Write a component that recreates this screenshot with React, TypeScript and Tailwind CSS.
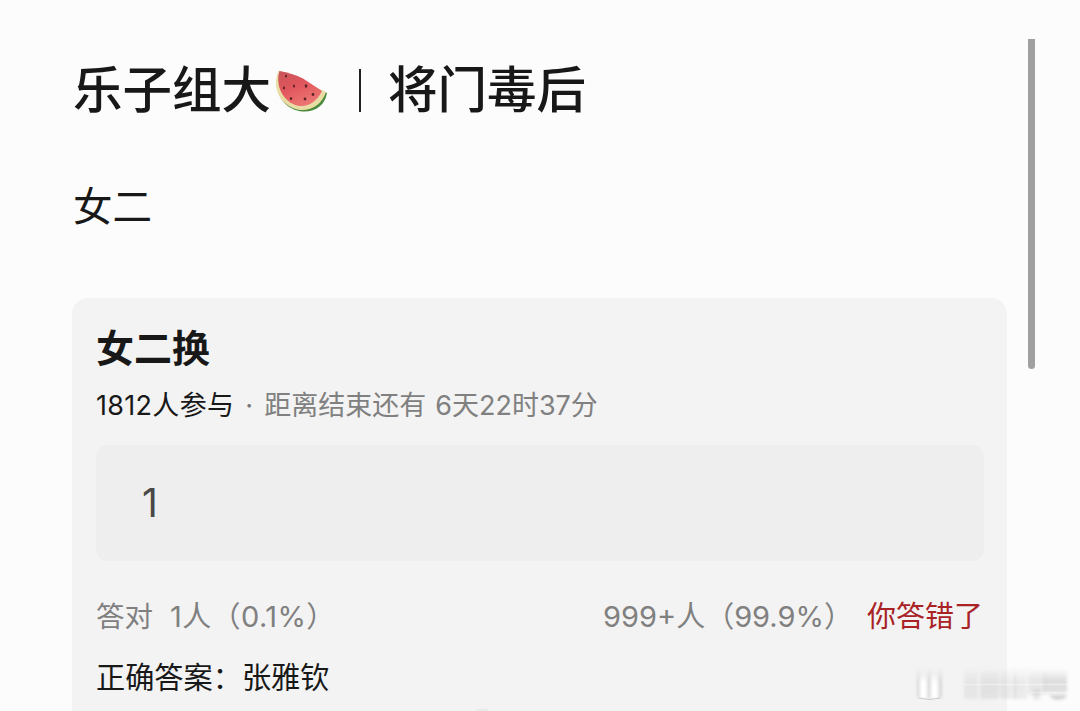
import type { ReactNode } from "react";

interface Poll {
  title: string;
  joined: string;
  deadline: string;
  input: string;
  right: string;
  wrong: string;
  result: string;
  answer: string;
}

const poll: Poll = {
  title: "女二换",
  joined: "1812人参与",
  deadline: "6天22时37分",
  input: "1",
  right: "1人（0.1%）",
  wrong: "999+人（99.9%）",
  result: "你答错了",
  answer: "张雅钦",
};

export default function App() {
  return (
    <div className="relative flex h-[711px] w-[1080px] overflow-hidden bg-[#fcfcfc] font-['Inter','Noto_Sans_CJK_SC',sans-serif] text-[#181818]">
      <main className="ml-[72px] flex w-[935px] shrink-0 flex-col pt-[58px]">
        <h1 className="flex h-16 items-center pl-px text-[49.5px] leading-[64px] font-medium whitespace-nowrap">
          <span>乐子组大</span>
          <Watermelon />
          <span className="ml-[31px] h-[43px] w-[2px] bg-[#222]" />
          <span className="ml-[27px]">将门毒后</span>
        </h1>
        <p className="mt-[61px] h-12 pl-px text-[39.5px] leading-[48px]">女二</p>

        {/* Thẻ bình chọn */}
        <section className="mt-[67px] flex h-[440px] shrink-0 flex-col rounded-t-[16px] bg-[#f3f3f3] px-6 pt-[26px]">
          <h2 className="h-12 text-[38px] leading-[48px] font-bold">{poll.title}</h2>
          <div className="mt-4 flex h-9 items-center text-[27px] leading-9 whitespace-nowrap">
            <span className="tracking-[0.3px]">{poll.joined}</span>
            <span className="w-[30px] text-center text-[#777]">·</span>
            <span className="text-[#808080]">距离结束还有</span>
            <span className="ml-[9px] text-[#808080]">{poll.deadline}</span>
          </div>
          <div className="mt-[21px] flex h-[116px] w-[888px] shrink-0 items-center rounded-[12px] bg-[#eeeeee] pt-px pl-[46px] text-[39px] text-[#484848]">
            {poll.input}
          </div>
          <div className="mt-9 flex h-10 w-[888px] items-center text-[29px] leading-10 whitespace-nowrap text-[#808080]">
            <span className="text-[28.5px]">答对</span>
            <Stat className="ml-[17px] tracking-[0.4px]">{poll.right}</Stat>
            <Stat className="ml-auto">{poll.wrong}</Stat>
            <span className="ml-[14px] pr-px text-[29px] text-[#a82226]">{poll.result}</span>
          </div>
          <p className="mt-[21px] h-10 text-[29.2px] leading-10">正确答案：{poll.answer}</p>
        </section>
      </main>

      {/* Thanh cuộn */}
      <div className="mt-[39px] ml-[21px] h-[330px] w-[7px] rounded-b-full bg-[#a0a0a0]" />

      {/* Mép nút phía dưới */}
      <div className="absolute bottom-0 left-[477px] h-px w-[11px] rounded-t-full bg-[#d2d2d2] blur-[1px]" />

      <Watermark />
    </div>
  );
}

function Stat({ className, children }: { className: string; children: ReactNode }) {
  return <span className={className}>{children}</span>;
}

function Watermelon() {
  return (
    <svg className="ml-[3px] shrink-0" width="54" height="50" viewBox="0 0 54 50">
      <defs>
        <linearGradient id="flesh" x1="0" y1="0" x2="0.5" y2="1">
          <stop offset="0" stopColor="#c9555a" />
          <stop offset="0.5" stopColor="#e0565c" />
          <stop offset="1" stopColor="#ec7472" />
        </linearGradient>
      </defs>
      <path d="M5 6 C-2 24 8 45 29 46.5 C42 47 51 40 53 28 Z" fill="#4c8b3c" />
      <path d="M5 5.5 C-3 22 6 42 26 45 C38 46 48 39 52 27 Z" fill="#e9dda5" />
      <path d="M5.5 6 C1 20 9 37 23 40.5 C33 43 43 37 48 26 L29 13.5 Q18 8 5.5 6 Z" fill="url(#flesh)" />
      <g fill="#5c2427">
        <ellipse cx="12" cy="11" rx="1" ry="1.5" />
        <ellipse cx="20" cy="21" rx="1" ry="1.5" />
        <ellipse cx="32" cy="21" rx="1.3" ry="1.7" />
        <ellipse cx="10" cy="23" rx="1" ry="1.4" />
        <ellipse cx="17" cy="33.5" rx="1.2" ry="1.5" />
        <ellipse cx="31" cy="34" rx="1.4" ry="1.4" />
        <ellipse cx="39" cy="29.5" rx="1.4" ry="1.4" />
      </g>
    </svg>
  );
}

function Watermark() {
  return (
    <svg className="absolute right-0 bottom-0" width="180" height="56" viewBox="0 0 180 56">
      <defs>
        <linearGradient id="fade" x1="0" y1="0" x2="0" y2="1">
          <stop offset="0" stopColor="#999" stopOpacity="0" />
          <stop offset="0.5" stopColor="#999" stopOpacity="0.32" />
          <stop offset="1" stopColor="#999" stopOpacity="0.28" />
        </linearGradient>
        <linearGradient id="white" x1="0" y1="0" x2="0" y2="1">
          <stop offset="0" stopColor="#fff" stopOpacity="0" />
          <stop offset="0.5" stopColor="#fff" />
          <stop offset="1" stopColor="#fff" />
        </linearGradient>
        <filter id="soft" x="-10%" y="-10%" width="120%" height="120%">
          <feGaussianBlur stdDeviation="1.5" />
        </filter>
      </defs>
      <g filter="url(#soft)">
        <rect x="17" y="12" width="25" height="31" fill="url(#fade)" />
        <rect x="20" y="12" width="7" height="31" fill="url(#white)" />
        <rect x="31" y="12" width="7" height="31" fill="url(#white)" />
        <rect x="64" y="12" width="14" height="32" fill="url(#fade)" opacity="0.5" />
        <rect x="80" y="12" width="18" height="32" fill="url(#fade)" opacity="0.65" />
        <rect x="98" y="12" width="3" height="30" fill="url(#fade)" opacity="0.4" />
        <rect x="101" y="12" width="11" height="32" fill="url(#fade)" opacity="0.6" />
        <rect x="113" y="12" width="3" height="32" fill="url(#fade)" />
        <rect x="116" y="12" width="11" height="32" fill="url(#fade)" opacity="0.6" />
        <rect x="128" y="12" width="17" height="28" fill="url(#fade)" opacity="0.7" />
        <rect x="133" y="34" width="7" height="11" fill="#999" opacity="0.2" />
        <rect x="144" y="14" width="23" height="24" fill="url(#fade)" />
        <path d="M148 40 H167 Q166 45 155 45 Z" fill="#999" opacity="0.4" />
      </g>
      <path d="M19 43 Q29 46 40 43" stroke="#999" strokeWidth="0.8" fill="none" opacity="0.6" />
      <path d="M64 29.5 H170 M130 37.5 H168" stroke="#fff" strokeWidth="1.3" opacity="0.4" />
    </svg>
  );
}
